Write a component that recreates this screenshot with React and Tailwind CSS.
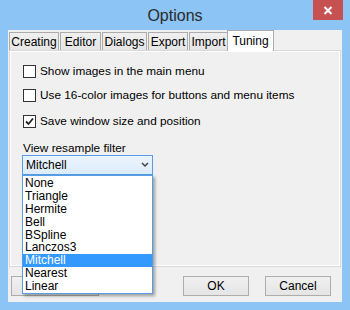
import React from 'react';

const font = { fontFamily: '"Liberation Sans", Arial, sans-serif' };

const tabs = [
  { name: 'Creating', w: 'w-[50px]' },
  { name: 'Editor', w: 'w-[41px]' },
  { name: 'Dialogs', w: 'w-[45px]' },
  { name: 'Export', w: 'w-[40px]' },
  { name: 'Import', w: 'w-[39px]' },
];
const filters = ['None', 'Triangle', 'Hermite', 'Bell', 'BSpline', 'Lanczos3', 'Mitchell', 'Nearest', 'Linear'];

function Checkbox({ checked, label }) {
  return (
    <div className="flex items-center gap-[4px] h-[13px]">
      <div className="w-[13px] h-[13px] border border-[#333] bg-white flex items-center justify-center">
        {checked && (
          <svg width="9" height="9" viewBox="0 0 9 9">
            <path d="M1 4.5 L3.5 7 L8 1.5" fill="none" stroke="#222" strokeWidth="1.8" />
          </svg>
        )}
      </div>
      <span className="text-[11.8px] text-black leading-none">{label}</span>
    </div>
  );
}

function Button({ children, className = '' }) {
  return (
    <div className={`h-[20px] border border-[#adadad] bg-gradient-to-b from-[#f0f0f0] to-[#e5e5e5] flex items-center justify-center text-[12px] text-black ${className}`}>
      {children}
    </div>
  );
}

export default function App() {
  return (
    <div className="w-[350px] h-[310px] bg-[#8bc4f5] flex flex-col relative overflow-hidden" style={font}>
      {/* title bar */}
      <div className="h-[30px] relative flex items-center justify-center">
        <span className="text-[16px] text-[#2b2b2b] mt-[1px]">Options</span>
        <div className="absolute right-[7px] top-0 w-[30px] h-[20px] bg-[#c75050] flex items-center justify-center">
          <svg width="10" height="9" viewBox="0 0 10 9">
            <path d="M1.5 1 L8.5 8 M8.5 1 L1.5 8" stroke="#fff" strokeWidth="2" />
          </svg>
        </div>
      </div>

      {/* client area */}
      <div className="ml-[8px] w-[334px] h-[272px] bg-[#f0f0f0] relative">
        {/* tabs */}
        <div className="flex items-end h-[20px] pl-[1px]">
          {tabs.map((t, i) => (
            <div
              key={t.name}
              className={`h-[18px] ${t.w} border border-b-0 border-[#acacac] bg-gradient-to-b from-[#f0f0f0] to-[#e5e5e5] flex items-center justify-center text-[12px] text-black ${i > 0 ? 'ml-[1px]' : ''}`}
            >
              {t.name}
            </div>
          ))}
          <div className="h-[21px] w-[47px] mb-[-1px] border border-b-0 border-[#acacac] bg-white flex items-center justify-center text-[12px] text-black relative z-10 ml-[-1px]">
            Tuning
          </div>
        </div>

        {/* tab page */}
        <div className="ml-[1px] w-[332px] h-[217px] border border-[#d9d9d9] bg-white p-[1px]">
          <div className="w-full h-full bg-[#f0f0f0] pl-[12px] pt-[13px] flex flex-col">
            <Checkbox label="Show images in the main menu" />
            <div className="h-[11px]" />
            <Checkbox label="Use 16-color images for buttons and menu items" />
            <div className="h-[13px]" />
            <Checkbox checked label="Save window size and position" />
            <div className="mt-[15px] text-[11.8px] text-black leading-none">View resample filter</div>
          </div>
        </div>

        {/* buttons */}
        <div className="flex mt-[9px] pl-[3px] pr-[11px]">
          <Button className="w-[88px]" />
          <div className="flex-1" />
          <Button className="w-[66px]">OK</Button>
          <Button className="w-[66px] ml-[16px]">Cancel</Button>
        </div>

        {/* combo + open dropdown */}
        <div className="absolute left-[14px] top-[125px] w-[131px] z-20">
          <div className="h-[20px] border border-[#569de5] bg-gradient-to-b from-[#ecf4fc] to-[#dcecfc] flex items-center justify-between px-[3px] text-[12px] text-black">
            <span>Mitchell</span>
            <svg width="8" height="6" viewBox="0 0 8 6">
              <path d="M1 1 L4 4 L7 1" fill="none" stroke="#444" strokeWidth="1.5" />
            </svg>
          </div>
          <div className="border border-[#569de5] bg-white shadow-[2px_2px_3px_rgba(0,0,0,0.35)] py-[1px]">
            {filters.map(f => (
              <div
                key={f}
                className={`h-[12.8px] px-[2px] flex items-center text-[12px] leading-none ${f === 'Mitchell' ? 'bg-[#3399ff] text-white' : 'text-black'}`}
              >
                {f}
              </div>
            ))}
          </div>
        </div>
      </div>
    </div>
  );
}
